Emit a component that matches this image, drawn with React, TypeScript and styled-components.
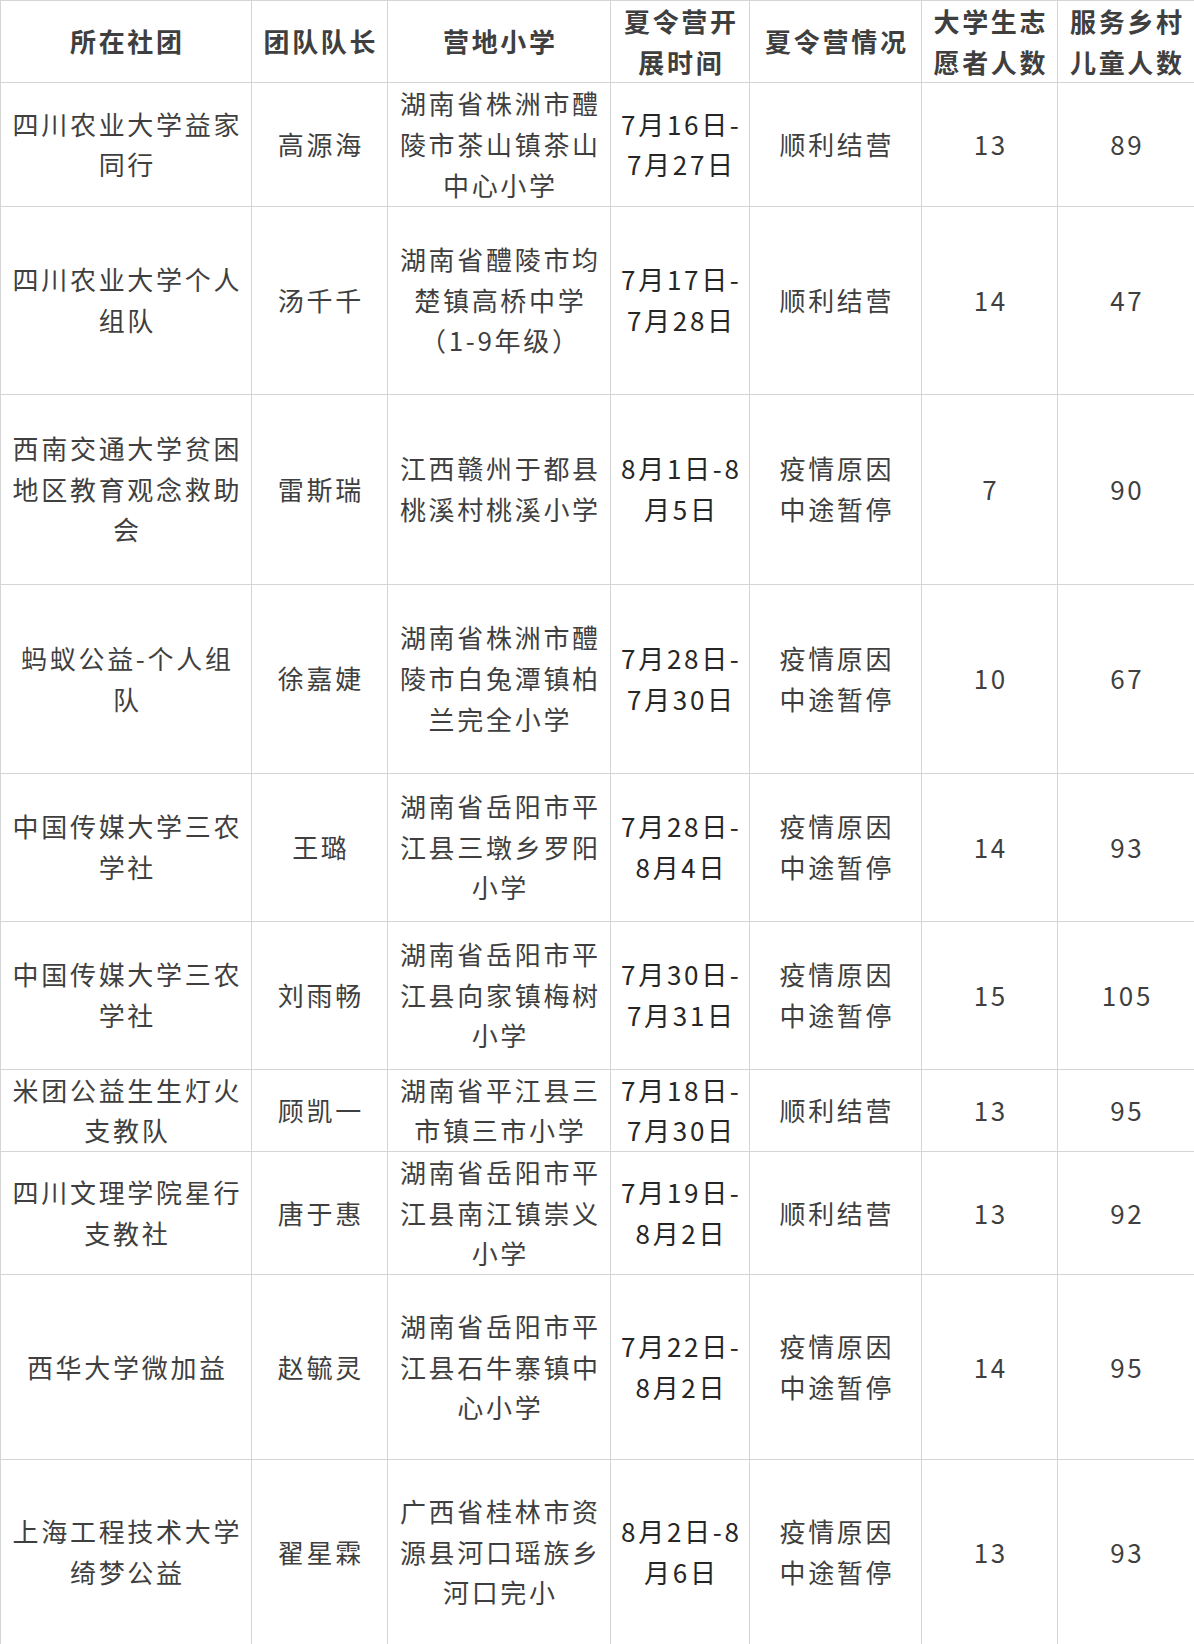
import React from 'react';
import styled, { createGlobalStyle } from 'styled-components';

type Row = {
    height: number;
    club: string[];
    leader: string;
    school: string[];
    date: string[];
    status: string[];
    volunteers: string;
    children: string;
};

const widths = [251, 136, 223, 139, 172, 136, 137];

const headers = [
    ['所在社团'],
    ['团队队长'],
    ['营地小学'],
    ['夏令营开', '展时间'],
    ['夏令营情况'],
    ['大学生志', '愿者人数'],
    ['服务乡村', '儿童人数'],
];

const done = ['顺利结营'];
const stopped = ['疫情原因', '中途暂停'];

const rows: Row[] = [
    { height: 123, club: ['四川农业大学益家', '同行'], leader: '高源海', school: ['湖南省株洲市醴', '陵市茶山镇茶山', '中心小学'], date: ['7月16日-', '7月27日'], status: done, volunteers: '13', children: '89' },
    { height: 188, club: ['四川农业大学个人', '组队'], leader: '汤千千', school: ['湖南省醴陵市均', '楚镇高桥中学', '（1-9年级）'], date: ['7月17日-', '7月28日'], status: done, volunteers: '14', children: '47' },
    { height: 190, club: ['西南交通大学贫困', '地区教育观念救助', '会'], leader: '雷斯瑞', school: ['江西赣州于都县', '桃溪村桃溪小学'], date: ['8月1日-8', '月5日'], status: stopped, volunteers: '7', children: '90' },
    { height: 189, club: ['蚂蚁公益-个人组', '队'], leader: '徐嘉婕', school: ['湖南省株洲市醴', '陵市白兔潭镇柏', '兰完全小学'], date: ['7月28日-', '7月30日'], status: stopped, volunteers: '10', children: '67' },
    { height: 148, club: ['中国传媒大学三农', '学社'], leader: '王璐', school: ['湖南省岳阳市平', '江县三墩乡罗阳', '小学'], date: ['7月28日-', '8月4日'], status: stopped, volunteers: '14', children: '93' },
    { height: 148, club: ['中国传媒大学三农', '学社'], leader: '刘雨畅', school: ['湖南省岳阳市平', '江县向家镇梅树', '小学'], date: ['7月30日-', '7月31日'], status: stopped, volunteers: '15', children: '105' },
    { height: 82, club: ['米团公益生生灯火', '支教队'], leader: '顾凯一', school: ['湖南省平江县三', '市镇三市小学'], date: ['7月18日-', '7月30日'], status: done, volunteers: '13', children: '95' },
    { height: 123, club: ['四川文理学院星行', '支教社'], leader: '唐于惠', school: ['湖南省岳阳市平', '江县南江镇崇义', '小学'], date: ['7月19日-', '8月2日'], status: done, volunteers: '13', children: '92' },
    { height: 185, club: ['西华大学微加益'], leader: '赵毓灵', school: ['湖南省岳阳市平', '江县石牛寨镇中', '心小学'], date: ['7月22日-', '8月2日'], status: stopped, volunteers: '14', children: '95' },
    { height: 185, club: ['上海工程技术大学', '绮梦公益'], leader: '翟星霖', school: ['广西省桂林市资', '源县河口瑶族乡', '河口完小'], date: ['8月2日-8', '月6日'], status: stopped, volunteers: '13', children: '93' },
];

const Lines = ({ lines }: { lines: string[] }) => (
    <>
        {lines.map((l, i) => (
            <Line key={i}>{l}</Line>
        ))}
    </>
);

const App = () => {
    return (
        <Page>
            <GlobalStyle />
            <Table>
                <colgroup>
                    {widths.map((w, i) => (
                        <col key={i} style={{ width: w }} />
                    ))}
                </colgroup>
                <thead>
                    <Tr $h={82}>
                        {headers.map((h, i) => (
                            <Th key={i}>
                                <Lines lines={h} />
                            </Th>
                        ))}
                    </Tr>
                </thead>
                <tbody>
                    {rows.map((r, i) => (
                        <Tr key={i} $h={r.height}>
                            <Td><Lines lines={r.club} /></Td>
                            <Td><Line>{r.leader}</Line></Td>
                            <Td><Lines lines={r.school} /></Td>
                            <Td $dark><Lines lines={r.date} /></Td>
                            <Td><Lines lines={r.status} /></Td>
                            <Td><Line>{r.volunteers}</Line></Td>
                            <Td><Line>{r.children}</Line></Td>
                        </Tr>
                    ))}
                </tbody>
            </Table>
        </Page>
    );
};

const GlobalStyle = createGlobalStyle`
    html, body {
        margin: 0;
        padding: 0;
        background: #ffffff;
    }
`;

const Page = styled.div`
    width: 1194px;
    font-family: "Noto Sans CJK SC", "Noto Sans", sans-serif;
`;

const Table = styled.table`
    width: 1194px;
    border-collapse: collapse;
    table-layout: fixed;
    border: 1px solid #d4d4d4;
`;

const Tr = styled.tr<{ $h: number }>`
    height: ${(p) => p.$h}px;
`;

const Th = styled.th`
    border: 1px solid #d4d4d4;
    padding: 0;
    text-align: center;
    vertical-align: middle;
    font-size: 26px;
    font-weight: 700;
    line-height: 40.7px;
    letter-spacing: 2.7px;
    color: #3f3f3f;
`;

const Td = styled.td<{ $dark?: boolean }>`
    border: 1px solid #d4d4d4;
    padding: 0;
    text-align: center;
    vertical-align: middle;
    font-size: 26px;
    font-weight: 400;
    line-height: 40.7px;
    letter-spacing: 2.7px;
    color: ${(p) => (p.$dark ? '#262626' : '#3f3f3f')};
`;

const Line = styled.div`
    white-space: nowrap;
    padding-left: 2.7px;
`;

export default App;
